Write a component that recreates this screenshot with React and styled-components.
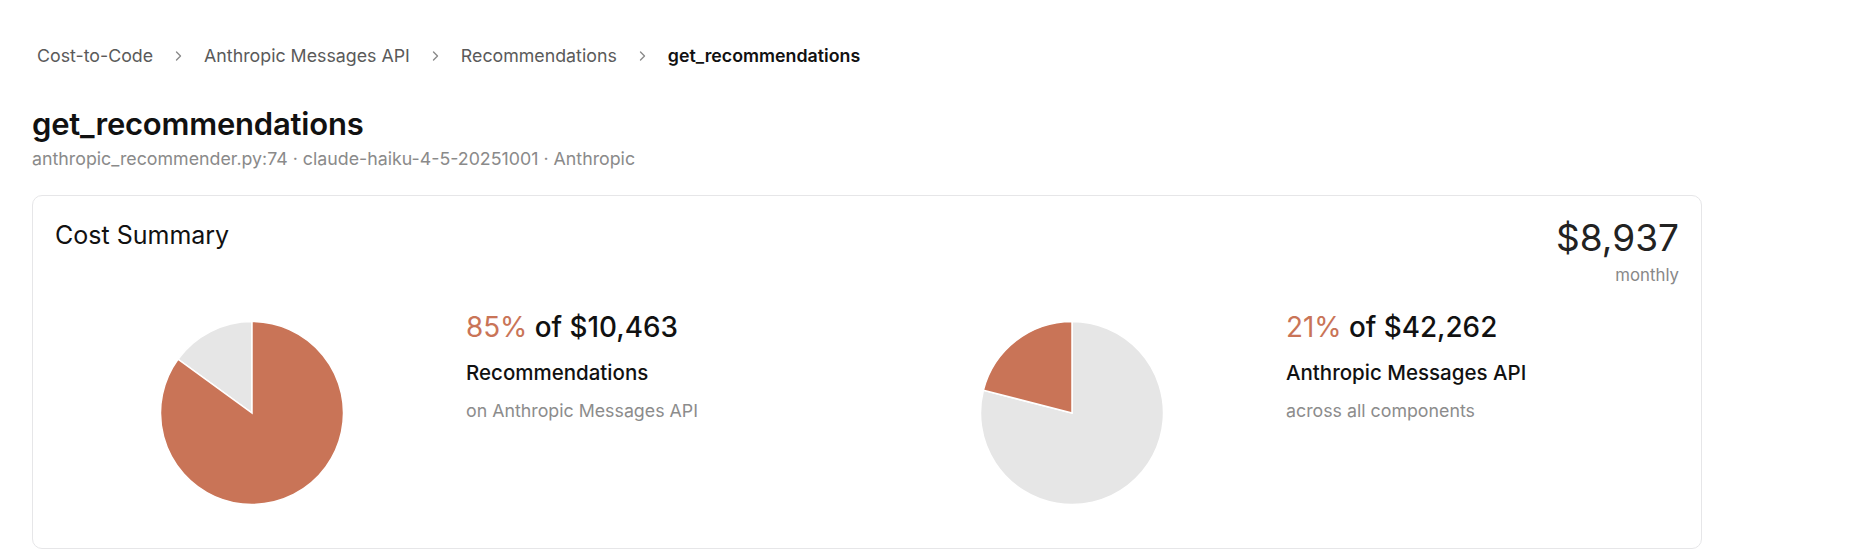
import React from 'react';
import styled, { createGlobalStyle } from 'styled-components';

const GlobalStyle = createGlobalStyle`
  html, body {
    margin: 0;
    padding: 0;
    background: #fff;
  }
  body {
    font-family: Inter, "Noto Sans", sans-serif;
    color: #111;
  }
`;

const ACCENT = '#c97457';
const MUTED = '#e6e6e6';

const Page = styled.div`
  padding: 38px 32px 0 32px;
  width: 1670px;
`;

const Crumbs = styled.nav`
  display: flex;
  align-items: center;
  gap: 22px;
  padding-left: 5px;
  font-size: 17.8px;
  line-height: 36px;
  color: #555;
`;

const Crumb = styled.span`
  color: ${props => (props.current ? '#111' : '#5a5a5a')};
  font-weight: ${props => (props.current ? 600 : 400)};
`;

const Chevron = styled.svg`
  width: 7px;
  height: 12px;
  color: #8a8a8a;
`;

const Title = styled.h1`
  margin: 31px 0 0;
  font-size: 31px;
  font-weight: 600;
  line-height: 38px;
  letter-spacing: -0.2px;
`;

const Meta = styled.div`
  margin-top: 4px;
  font-size: 17.8px;
  line-height: 24px;
  color: #8a8a8a;
`;

const Card = styled.section`
  margin-top: 24px;
  border: 1px solid #e6e6e8;
  border-radius: 10px;
  padding: 20px 22px 36px;
`;

const CardHead = styled.div`
  display: flex;
  justify-content: space-between;
  align-items: flex-start;
`;

const CardTitle = styled.h2`
  margin: 0;
  padding-top: 3px;
  font-size: 25px;
  font-weight: 400;
  line-height: 32px;
`;

const Total = styled.div`
  text-align: right;
`;

const TotalValue = styled.div`
  font-size: 37px;
  line-height: 44px;
  color: #222;
`;

const TotalUnit = styled.div`
  margin-top: 4px;
  font-size: 16.8px;
  line-height: 22px;
  color: #888;
`;

const Grid = styled.div`
  display: grid;
  grid-template-columns: 1fr 1fr;
  gap: 16px;
  margin-top: 26px;
`;

const Share = styled.div`
  display: flex;
  align-items: flex-start;
  gap: 15px;
`;

const ChartBox = styled.div`
  width: 396px;
  height: 200px;
  padding: 2px 3px 0 0;
  box-sizing: border-box;
  display: flex;
  align-items: center;
  justify-content: center;
  flex-shrink: 0;
`;

const Info = styled.div`
  padding-top: 0;
`;

const Headline = styled.div`
  font-size: 27.8px;
  font-weight: 500;
  line-height: 30px;
  color: #111;
`;

const Pct = styled.span`
  color: ${ACCENT};
  font-weight: 400;
`;

const Name = styled.div`
  margin-top: 17px;
  font-size: 20.5px;
  font-weight: 500;
  line-height: 28px;
`;

const Scope = styled.div`
  margin-top: 12px;
  font-size: 17.8px;
  line-height: 24px;
  color: #8c8c8c;
`;

const slicePath = (cx, cy, r, from, to) => {
  const pt = a => {
    const rad = (a - 90) * (Math.PI / 180);
    return [cx + r * Math.cos(rad), cy + r * Math.sin(rad)];
  };
  const [x1, y1] = pt(from);
  const [x2, y2] = pt(to);
  const large = to - from > 180 ? 1 : 0;
  return `M${cx},${cy} L${x1},${y1} A${r},${r} 0 ${large} 1 ${x2},${y2} Z`;
};

const Pie = ({ share, accentFirst }) => {
  const deg = share * 360;
  const accent = accentFirst ? [0, deg] : [360 - deg, 360];
  const rest = accentFirst ? [deg, 360] : [0, 360 - deg];
  return (
    <svg width="186" height="186" viewBox="0 0 186 186">
      <path d={slicePath(93, 93, 91.5, rest[0], rest[1])} fill={MUTED} stroke="#fff" strokeWidth="1.5" />
      <path d={slicePath(93, 93, 91.5, accent[0], accent[1])} fill={ACCENT} stroke="#fff" strokeWidth="1.5" />
    </svg>
  );
};

const ChevronIcon = () => (
  <Chevron viewBox="0 0 7 12" fill="none">
    <path d="M1.5 2l4 4-4 4" stroke="currentColor" strokeWidth="1.4" strokeLinecap="round" strokeLinejoin="round" />
  </Chevron>
);

const crumbs = ['Cost-to-Code', 'Anthropic Messages API', 'Recommendations', 'get_recommendations'];

const shares = [
  { pct: 85, share: 0.85, total: '$10,463', name: 'Recommendations', scope: 'on Anthropic Messages API', accentFirst: true },
  { pct: 21, share: 0.21, total: '$42,262', name: 'Anthropic Messages API', scope: 'across all components', accentFirst: false },
];

export default function App() {
  return (
    <>
      <GlobalStyle />
      <Page>
        <Crumbs>
          {crumbs.map((c, i) => (
            <React.Fragment key={c}>
              {i > 0 && <ChevronIcon />}
              <Crumb current={i === crumbs.length - 1}>{c}</Crumb>
            </React.Fragment>
          ))}
        </Crumbs>
        <Title>get_recommendations</Title>
        <Meta>anthropic_recommender.py:74 · claude-haiku-4-5-20251001 · Anthropic</Meta>
        <Card>
          <CardHead>
            <CardTitle>Cost Summary</CardTitle>
            <Total>
              <TotalValue>$8,937</TotalValue>
              <TotalUnit>monthly</TotalUnit>
            </Total>
          </CardHead>
          <Grid>
            {shares.map(s => (
              <Share key={s.name}>
                <ChartBox>
                  <Pie share={s.share} accentFirst={s.accentFirst} />
                </ChartBox>
                <Info>
                  <Headline>
                    <Pct>{s.pct}%</Pct> of {s.total}
                  </Headline>
                  <Name>{s.name}</Name>
                  <Scope>{s.scope}</Scope>
                </Info>
              </Share>
            ))}
          </Grid>
        </Card>
      </Page>
    </>
  );
}
